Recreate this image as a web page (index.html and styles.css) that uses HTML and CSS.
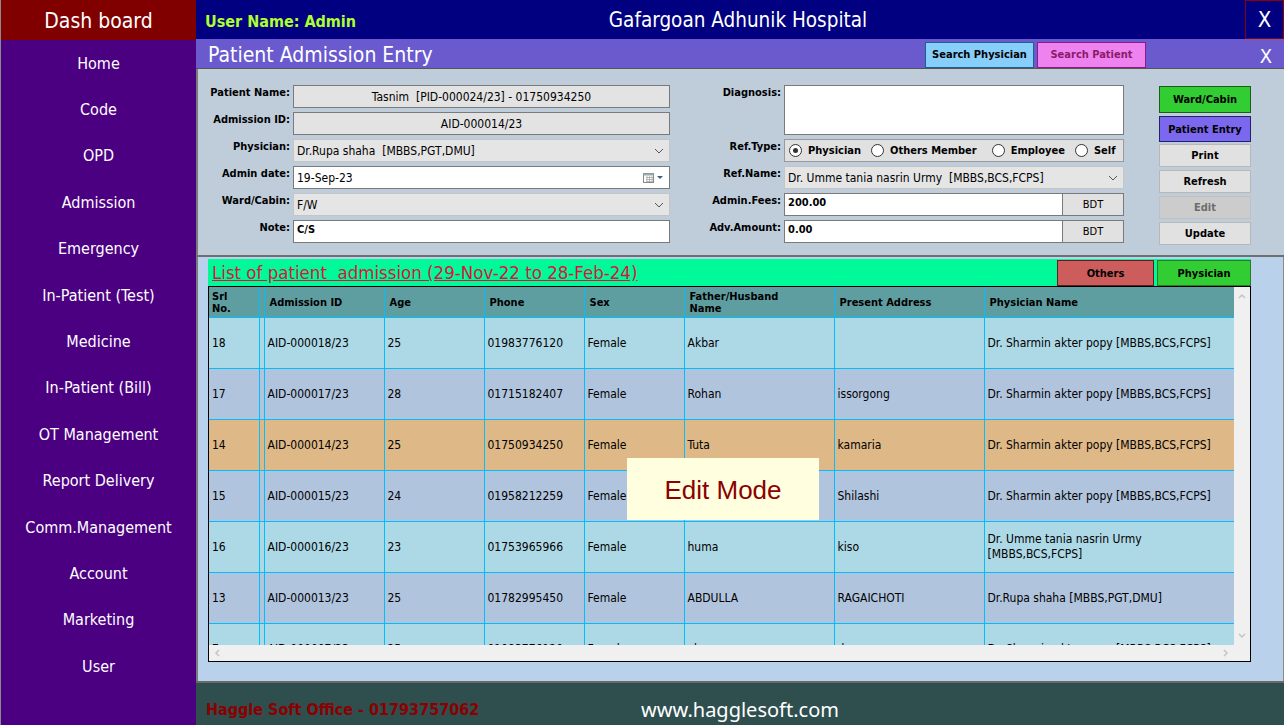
FILE: index.html
```html
<!DOCTYPE html>
<html>
<head>
<meta charset="utf-8">
<link rel="stylesheet" href="styles.css">
</head>
<body>
<div class="app">
  <aside class="sidebar">
    <div class="brand">Dash board</div>
    <nav class="menu">
      <div class="item">Home</div>
      <div class="item">Code</div>
      <div class="item">OPD</div>
      <div class="item">Admission</div>
      <div class="item">Emergency</div>
      <div class="item">In-Patient (Test)</div>
      <div class="item">Medicine</div>
      <div class="item">In-Patient (Bill)</div>
      <div class="item">OT Management</div>
      <div class="item">Report Delivery</div>
      <div class="item">Comm.Management</div>
      <div class="item">Account</div>
      <div class="item">Marketing</div>
      <div class="item">User</div>
    </nav>
  </aside>
  <main class="main">
    <header class="topbar">
      <div class="user">User Name: Admin</div>
      <div class="hospital">Gafargoan Adhunik Hospital</div>
      <div class="close-main">X</div>
    </header>
    <div class="subbar">
      <div class="page-title">Patient Admission Entry</div>
      <button class="btn-search phys">Search Physician</button>
      <button class="btn-search pat">Search Patient</button>
      <div class="close-sub">X</div>
    </div>
    <section class="form">
      <div class="fields">
        <label class="lbl">Patient Name:</label>
        <div class="box ro center">Tasnim&nbsp; [PID-000024/23] - 01750934250</div>
        <label class="lbl">Diagnosis:</label>
        <div class="box white tall"></div>

        <label class="lbl">Admission ID:</label>
        <div class="box ro center">AID-000014/23</div>
        <div class="spacer"></div>

        <label class="lbl">Physician:</label>
        <div class="box combo">Dr.Rupa shaha&nbsp; [MBBS,PGT,DMU]<span class="chev"><svg width="10" height="6" viewBox="0 0 10 6"><path d="M1 1 L5 5 L9 1" fill="none" stroke="#555" stroke-width="1"/></svg></span></div>
        <label class="lbl">Ref.Type:</label>
        <div class="box radios">
          <span class="radio on"></span><span class="rl">Physician</span>
          <span class="radio"></span><span class="rl">Others Member</span>
          <span class="radio"></span><span class="rl">Employee</span>
          <span class="radio"></span><span class="rl">Self</span>
        </div>

        <label class="lbl">Admin date:</label>
        <div class="box white date">19-Sep-23<span class="cal"><svg width="24" height="12" viewBox="0 0 24 12"><rect x="1.5" y="1.5" width="10" height="9" fill="#fff" stroke="#8a8a8a"/><rect x="1.5" y="1.5" width="10" height="2" fill="#9aa"/><path d="M4 5.5h7M4 7.5h7M4 9.5h7M5 4v6M7.5 4v6M10 4v6" stroke="#aaa" stroke-width="0.8"/><path d="M15 4 L21 4 L18 7 Z" fill="#4a5a7a"/></svg></span></div>
        <label class="lbl">Ref.Name:</label>
        <div class="box combo">Dr. Umme tania nasrin Urmy&nbsp; [MBBS,BCS,FCPS]<span class="chev"><svg width="10" height="6" viewBox="0 0 10 6"><path d="M1 1 L5 5 L9 1" fill="none" stroke="#555" stroke-width="1"/></svg></span></div>

        <label class="lbl">Ward/Cabin:</label>
        <div class="box combo">F/W<span class="chev"><svg width="10" height="6" viewBox="0 0 10 6"><path d="M1 1 L5 5 L9 1" fill="none" stroke="#555" stroke-width="1"/></svg></span></div>
        <label class="lbl">Admin.Fees:</label>
        <div class="money"><div class="box white bold">200.00</div><div class="bdt">BDT</div></div>

        <label class="lbl">Note:</label>
        <div class="box white bold">C/S</div>
        <label class="lbl">Adv.Amount:</label>
        <div class="money"><div class="box white bold">0.00</div><div class="bdt">BDT</div></div>
      </div>
      <div class="actions">
        <button class="act ward">Ward/Cabin</button>
        <button class="act entry">Patient Entry</button>
        <button class="act plain">Print</button>
        <button class="act plain">Refresh</button>
        <button class="act disabled">Edit</button>
        <button class="act plain">Update</button>
      </div>
    </section>
    <section class="list">
      <div class="list-head">
        <div class="list-title">List of patient&nbsp; admission (29-Nov-22 to 28-Feb-24)</div>
        <button class="filter others">Others</button>
        <button class="filter physician">Physician</button>
      </div>
      <div class="grid">
        <div class="grid-main">
          <div class="grid-view">
            <table class="tbl">
              <colgroup>
                <col style="width:50px"><col style="width:5px"><col style="width:120px"><col style="width:100px"><col style="width:100px"><col style="width:100px"><col style="width:150px"><col style="width:150px"><col style="width:250px">
              </colgroup>
              <thead>
                <tr><th>Srl<br>No.</th><th></th><th>Admission ID</th><th>Age</th><th>Phone</th><th>Sex</th><th>Father/Husband<br>Name</th><th>Present Address</th><th>Physician Name</th></tr>
              </thead>
              <tbody>
                <tr class="a"><td>18</td><td></td><td>AID-000018/23</td><td>25</td><td>01983776120</td><td>Female</td><td>Akbar</td><td></td><td>Dr. Sharmin akter popy [MBBS,BCS,FCPS]</td></tr>
                <tr class="b"><td>17</td><td></td><td>AID-000017/23</td><td>28</td><td>01715182407</td><td>Female</td><td>Rohan</td><td>issorgong</td><td>Dr. Sharmin akter popy [MBBS,BCS,FCPS]</td></tr>
                <tr class="sel"><td>14</td><td></td><td>AID-000014/23</td><td>25</td><td>01750934250</td><td>Female</td><td>Tuta</td><td>kamaria</td><td>Dr. Sharmin akter popy [MBBS,BCS,FCPS]</td></tr>
                <tr class="b"><td>15</td><td></td><td>AID-000015/23</td><td>24</td><td>01958212259</td><td>Female</td><td>Shilashi</td><td>Shilashi</td><td>Dr. Sharmin akter popy [MBBS,BCS,FCPS]</td></tr>
                <tr class="a"><td>16</td><td></td><td>AID-000016/23</td><td>23</td><td>01753965966</td><td>Female</td><td>huma</td><td>kiso</td><td>Dr. Umme tania nasrin Urmy [MBBS,BCS,FCPS]</td></tr>
                <tr class="b"><td>13</td><td></td><td>AID-000013/23</td><td>25</td><td>01782995450</td><td>Female</td><td>ABDULLA</td><td>RAGAICHOTI</td><td>Dr.Rupa shaha [MBBS,PGT,DMU]</td></tr>
                <tr class="a"><td>7</td><td></td><td>AID-000007/23</td><td>25</td><td>01983776120</td><td>Female</td><td>akas</td><td>dana</td><td>Dr. Sharmin akter popy [MBBS,BCS,FCPS]</td></tr>
              </tbody>
            </table>
            <div class="edit-mode">Edit Mode</div>
          </div>
          <div class="vscroll">
            <svg width="10" height="8" viewBox="0 0 10 8"><path d="M2 6 L5 3 L8 6" fill="none" stroke="#c4c4c4" stroke-width="1.5"/></svg>
            <svg width="10" height="8" viewBox="0 0 10 8"><path d="M2 2 L5 5 L8 2" fill="none" stroke="#c4c4c4" stroke-width="1.5"/></svg>
          </div>
        </div>
        <div class="hscroll">
          <svg width="8" height="10" viewBox="0 0 8 10"><path d="M6 2 L3 5 L6 8" fill="none" stroke="#c4c4c4" stroke-width="1.5"/></svg>
          <svg width="8" height="10" viewBox="0 0 8 10"><path d="M2 2 L5 5 L2 8" fill="none" stroke="#c4c4c4" stroke-width="1.5"/></svg>
          <div class="corner"></div>
        </div>
      </div>
    </section>
    <footer class="footer">
      <div class="office">Haggle Soft Office - 01793757062</div>
      <div class="web">www.hagglesoft.com</div>
    </footer>
  </main>
</div>
</body>
</html>
```
FILE: styles.css
```css
* { box-sizing: border-box; }
html, body { margin: 0; padding: 0; }
body {
  width: 1284px; height: 725px; overflow: hidden;
  font-family: "DejaVu Sans Condensed", "DejaVu Sans", sans-serif;
  font-size: 11px; color: #000;
}
button { font-family: inherit; font-size: 11px; cursor: default; padding: 0; }
.app { display: flex; width: 1284px; height: 725px; }

/* sidebar */
.sidebar { width: 196px; background: #4b0082; border-left: 1px solid #8a8a8a; display: flex; flex-direction: column; }
.brand { height: 40px; background: #800000; color: #fff; font-size: 21px; display: flex; align-items: center; justify-content: center; padding-top: 1px; }
.menu { display: flex; flex-direction: column; }
.item { height: 46.4px; display: flex; align-items: center; justify-content: center; color: #fff; font-size: 16px; }

/* main */
.main { flex: 1; display: flex; flex-direction: column; min-width: 0; }
.topbar { height: 39px; background: #000080; display: flex; align-items: center; position: relative; }
.user { color: #adff2f; font-weight: bold; font-size: 16px; padding-left: 9px; padding-top: 3px; width: 260px; }
.hospital { position: absolute; left: 0; right: 0; text-align: center; color: #fff; font-size: 20.5px; pointer-events: none; padding-right: 4px; }
.close-main { margin-left: auto; width: 39px; height: 39px; border: 1px solid #8b0000; color: #fff; font-size: 22px; display: flex; align-items: center; justify-content: center; }

.subbar { height: 30px; background: #6a5acd; display: flex; align-items: center; border-bottom: 1px solid #555; }
.page-title { color: #fff; font-size: 21px; padding-left: 12px; flex: 1; padding-top: 2px; }
.btn-search { width: 109px; height: 26px; font-weight: bold; margin-right: 3px; margin-top: 2px; }
.btn-search.phys { background: #87cefa; border: 1px solid #1f5f8b; color: #000; }
.btn-search.pat { background: #ee82ee; border: 1px solid #8b1a8b; color: #8b1a6b; margin-right: 0; }
.close-sub { width: 138px; text-align: right; padding-right: 12px; color: #fff; font-size: 20px; padding-top: 4px; }

/* form */
.form { height: 188px; background: #bfcddb; border-left: 2px solid #7a7a7a; border-bottom: 2px solid #6f6f6f; display: flex; padding-top: 16px; }
.fields { display: grid; grid-template-columns: 95px 377px 114px 340px; grid-template-rows: repeat(6, 23px); row-gap: 4px; }
.lbl { font-weight: bold; text-align: right; padding-right: 3px; padding-top: 1px; white-space: nowrap; }
.box { height: 23px; border: 1px solid #7a7a7a; display: flex; align-items: center; padding: 0 3px; white-space: nowrap; font-size: 12px; position: relative; }
.box.ro { background: #e3e3e3; font-size: 12px; }
.box.center { justify-content: center; }
.box.white { background: #fff; }
.box.bold { font-weight: bold; align-items: flex-start; padding-top: 2px; font-size: 11px; }
.box.tall { grid-row: span 2; height: 50px; }
.box.combo { background: #e5e5e5; border-color: #c5c5c5; }
.chev { position: absolute; right: 5px; top: 8px; display: flex; }
.cal { position: absolute; right: 3px; top: 5px; display: flex; }
.radios { background: #e1e1e1; border-color: #9a9a9a; font-weight: bold; font-size: 11px; padding-left: 4px; }
.radio { width: 13px; height: 13px; border-radius: 50%; border: 1px solid #333; background: #fff; margin-right: 6px; position: relative; flex: none; }
.radio.on::after { content: ""; position: absolute; left: 3px; top: 3px; width: 5px; height: 5px; border-radius: 50%; background: #333; }
.rl { margin-right: 10px; }
.rl:nth-child(4) { margin-right: 15px; }
.rl:nth-child(6) { margin-right: 10px; }
.money { display: flex; }
.money .box { flex: 1; }
.bdt { width: 61px; height: 23px; background: #e1e1e1; border: 1px solid #7a7a7a; border-left: none; display: flex; align-items: center; justify-content: center; font-size: 11px; }

.actions { display: flex; flex-direction: column; margin-left: 35px; width: 92px; padding-top: 1px; }
.act { height: 23px; font-weight: bold; margin-bottom: 3px; }
.act.ward { height: 27px; background: #32cd32; border: 1px solid #1c5c1c; margin-bottom: 3px; }
.act.entry { height: 26px; background: #7b68ee; border: 1px solid #222266; margin-bottom: 2px; }
.act.plain { background: #e1e1e1; border: 1px solid #b8b8b8; }
.act.disabled { background: #cccccc; border: 1px solid #c0c0c0; color: #6d6d6d; }

/* list */
.list { flex: 1; background: #b9d1ea; border-left: 2px solid #7a7a7a; border-right: 1px solid #8a8a8a; padding: 2px 32px 0 10px; display: flex; flex-direction: column; }
.list-head { height: 27px; background: #00fa9a; display: flex; align-items: stretch; padding-top: 1px; }
.list-title { flex: 1; color: #dc143c; font-size: 18.5px; text-decoration: underline; padding-left: 4px; line-height: 26px; }
.filter { font-weight: bold; border: 1px solid #5a2020; }
.filter.others { width: 97px; background: #cd5c5c; margin-right: 3px; }
.filter.physician { width: 94px; background: #32cd32; border-color: #2a7a2a; }
.grid { height: 376px; border: 1px solid #000; display: flex; flex-direction: column; background: #f0f0f0; }
.grid-main { height: 358px; display: flex; }
.grid-view { width: 1025px; height: 358px; overflow: hidden; position: relative; }
.tbl { border-collapse: collapse; table-layout: fixed; width: 1025px; }
.tbl th, .tbl td { border: 1px solid #00bfff; padding: 0 3px; text-align: left; vertical-align: middle; }
.tbl tr > :first-child { border-left: none; }
.tbl thead tr { height: 30px; background: #5f9ea0; }
.tbl th { font-weight: bold; font-size: 11px; line-height: 12px; border-top: none; padding-left: 5px; padding-top: 2px; }
.tbl th:first-child { padding-left: 3px; }
.tbl td { font-size: 12px; line-height: 15px; padding-top: 1px; }
.tbl tbody tr { height: 51px; }
.tbl tr.a { background: #add8e6; }
.tbl tr.b { background: #b0c4de; }
.tbl tr.sel { background: #deb887; }
.edit-mode { position: absolute; left: 418px; top: 171px; width: 192px; height: 62px; background: #ffffe0; color: #8b0000; font-family: "Liberation Sans", Arial, sans-serif; font-size: 26px; display: flex; align-items: center; justify-content: center; padding-top: 2px; }
.vscroll { width: 16px; background: #f0f0f0; display: flex; flex-direction: column; justify-content: space-between; align-items: center; padding: 5px 0; }
.hscroll { height: 16px; background: #f0f0f0; display: flex; align-items: center; position: relative; padding-left: 4px; }
.hscroll svg:nth-child(2) { position: absolute; left: 1013px; top: 3px; }
.corner { position: absolute; right: 0; top: 0; width: 16px; height: 16px; background: #f0f0f0; }

/* footer */
.footer { height: 44px; background: #2f4f4f; border-top: 2px solid #696969; position: relative; display: flex; align-items: center; }
.office { color: #8b0000; font-weight: bold; font-size: 16px; padding-left: 10px; padding-top: 10px; }
.web { position: absolute; left: 0; right: 0; top: 13px; text-align: center; color: #fff; font-size: 20px; font-family: "Noto Sans", sans-serif; }
```
